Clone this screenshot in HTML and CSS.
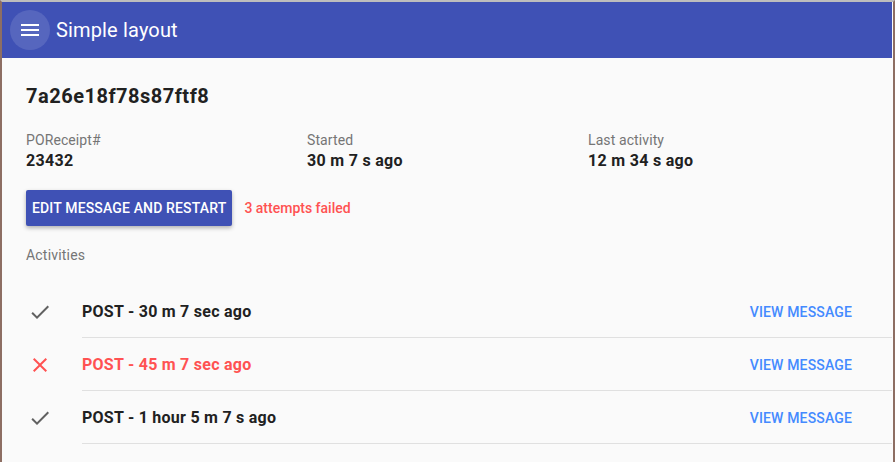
FILE: index.html
```html
<!DOCTYPE html>
<html>
<head>
<meta charset="utf-8">
<link rel="stylesheet" href="styles.css">
</head>
<body>
<div class="frame">
  <header class="appbar">
    <button class="menu-btn" aria-label="menu">
      <svg width="24" height="24" viewBox="0 0 24 24"><path d="M3 18h18v-2H3v2zm0-5h18v-2H3v2zm0-7v2h18V6H3z" fill="#fff"/></svg>
    </button>
    <span class="appbar-title">Simple layout</span>
  </header>
  <main class="content">
    <h1 class="msg-id">7a26e18f78s87ftf8</h1>
    <div class="meta">
      <div class="meta-item"><div class="meta-label">POReceipt#</div><div class="meta-value">23432</div></div>
      <div class="meta-item"><div class="meta-label">Started</div><div class="meta-value">30 m 7 s ago</div></div>
      <div class="meta-item"><div class="meta-label">Last activity</div><div class="meta-value">12 m 34 s ago</div></div>
    </div>
    <div class="actions">
      <button class="btn-primary">EDIT MESSAGE AND RESTART</button>
      <span class="failed">3 attempts failed</span>
    </div>
    <div class="section-label">Activities</div>
    <ul class="activities">
      <li class="activity">
        <span class="act-icon"><svg width="24" height="24" viewBox="0 0 24 24"><path d="M9 16.17L4.83 12l-1.42 1.41L9 19 21 7l-1.41-1.41z" fill="#616161"/></svg></span>
        <span class="act-text">POST - 30 m 7 sec ago</span>
        <span class="act-link">VIEW MESSAGE</span>
      </li>
      <li class="activity error">
        <span class="act-icon"><svg width="24" height="24" viewBox="0 0 24 24"><path d="M19 6.41L17.59 5 12 10.59 6.41 5 5 6.41 10.59 12 5 17.59 6.41 19 12 13.41 17.59 19 19 17.59 13.41 12z" fill="#ff5252"/></svg></span>
        <span class="act-text">POST - 45 m 7 sec ago</span>
        <span class="act-link">VIEW MESSAGE</span>
      </li>
      <li class="activity">
        <span class="act-icon"><svg width="24" height="24" viewBox="0 0 24 24"><path d="M9 16.17L4.83 12l-1.42 1.41L9 19 21 7l-1.41-1.41z" fill="#616161"/></svg></span>
        <span class="act-text">POST - 1 hour 5 m 7 s ago</span>
        <span class="act-link">VIEW MESSAGE</span>
      </li>
    </ul>
  </main>
</div>
</body>
</html>
```
FILE: styles.css
```css
* { box-sizing: border-box; }
html, body { margin: 0; padding: 0; background: #fafafa; }
body { font-family: Roboto, "Liberation Sans", sans-serif; color: #212121; }
.frame {
  width: 895px;
  height: 462px;
  overflow: hidden;
  border-left: 2px solid #8d6e63;
  border-top: 2px solid #bdbdbd;
  border-right: 2px solid #8d6e63;
  padding-right: 1px;
  background: #fafafa;
}
.appbar {
  height: 56px;
  background: #3f51b5;
  display: flex;
  align-items: center;
  padding-left: 8px;
}
.menu-btn {
  width: 40px; height: 40px;
  border-radius: 50%;
  border: 0;
  background: rgba(255,255,255,0.12);
  display: flex; align-items: center; justify-content: center;
  padding: 0;
  margin-right: 6px;
}
.appbar-title { color: #fff; font-size: 20px; font-weight: 400; letter-spacing: 0.15px; }
.content { padding: 24px 0 0 24px; }
.msg-id { margin: 0; font-size: 20px; font-weight: 700; line-height: 28px; color: #212121; letter-spacing: 0.5px; }
.meta { display: grid; grid-template-columns: 281px 281px 281px; margin-top: 21px; }
.meta-label { font-size: 14px; color: #757575; line-height: 18px; letter-spacing: 0.1px; }
.meta-value { font-size: 16px; font-weight: 700; line-height: 20px; margin-top: 2px; letter-spacing: 0.3px; }
.actions { display: flex; align-items: center; margin-top: 19px; gap: 12px; }
.btn-primary {
  height: 36px;
  padding: 0 6px;
  background: #3f51b5;
  color: #fff;
  border: 0;
  border-radius: 2px;
  font-family: Roboto, "Liberation Sans", sans-serif;
  font-size: 14px;
  font-weight: 500;
  letter-spacing: 0.15px;
  box-shadow: 0 2px 4px rgba(0,0,0,0.3);
}
.failed { color: #ff5252; font-size: 14px; font-weight: 500; }
.section-label { margin-top: 20px; font-size: 14px; color: #757575; line-height: 18px; letter-spacing: 0.2px; }
.activities { list-style: none; margin: 21px 0 0 0; padding: 0; }
.activity { display: flex; align-items: center; height: 53px; position: relative; }
.activity::after {
  content: ""; position: absolute; left: 56px; right: 0; bottom: 0;
  border-bottom: 1px solid #e0e0e0;
}
.act-icon { width: 24px; height: 24px; margin-left: 2px; margin-right: 30px; display: flex; }
.act-text { flex: 1; font-size: 16px; font-weight: 700; color: #212121; letter-spacing: 0.25px; }
.error .act-text { color: #ff5252; }
.act-link { color: #448aff; font-size: 14px; font-weight: 500; margin-right: 40px; letter-spacing: 0.15px; }
```
